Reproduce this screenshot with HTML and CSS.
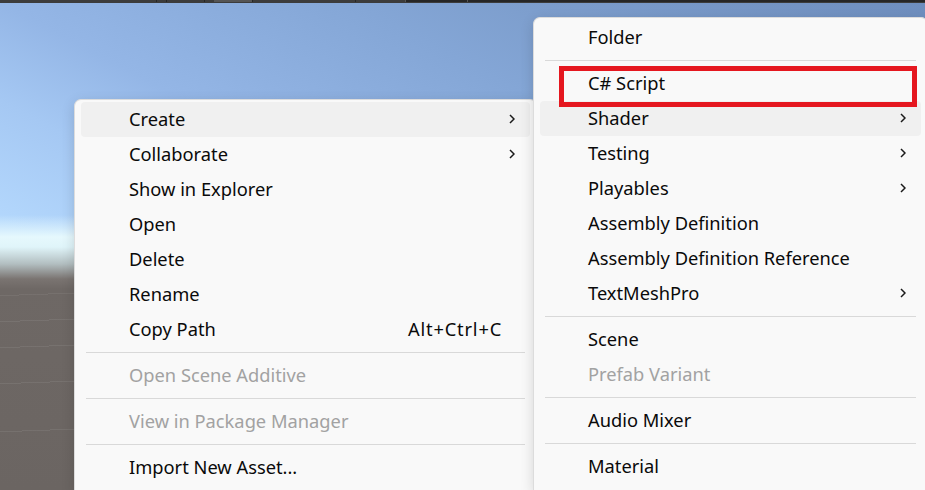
FILE: index.html
```html
<!DOCTYPE html>
<html lang="en">
  <head>
    <meta charset="UTF-8" />
    <meta name="viewport" content="width=device-width, initial-scale=1.0" />
    <title>Project</title>

    <link rel="stylesheet" href="styles.css">
  </head>

  <body>
    <!-- editor toolbar strip -->
    <div class="toolbar">
      <span></span><i></i><span></span><i></i><span></span><i></i><span></span>
      <b></b><i></i><span></span><i></i><span></span><b></b><i></i><b></b><i></i>
      <span></span>
    </div>

    <!-- scene view behind the menus -->
    <div class="scene"></div>

    <!-- project window context menu -->
    <ul class="menu menu-main">
      <li class="item active">
        <span class="label">Create</span>
        <svg class="chev" viewBox="0 0 6 10"><path d="M1 1l4 4-4 4" /></svg>
      </li>
      <li class="item">
        <span class="label">Collaborate</span>
        <svg class="chev" viewBox="0 0 6 10"><path d="M1 1l4 4-4 4" /></svg>
      </li>
      <li class="item"><span class="label">Show in Explorer</span></li>
      <li class="item"><span class="label">Open</span></li>
      <li class="item"><span class="label">Delete</span></li>
      <li class="item"><span class="label">Rename</span></li>
      <li class="item">
        <span class="label">Copy Path</span>
        <span class="keys">Alt+Ctrl+C</span>
      </li>
      <li class="sep"></li>
      <li class="item disabled"><span class="label">Open Scene Additive</span></li>
      <li class="sep"></li>
      <li class="item disabled"><span class="label">View in Package Manager</span></li>
      <li class="sep"></li>
      <li class="item"><span class="label">Import New Asset...</span></li>
    </ul>

    <!-- Create submenu -->
    <ul class="menu menu-sub">
      <li class="item"><span class="label">Folder</span></li>
      <li class="sep"></li>
      <li class="item"><span class="label">C# Script</span></li>
      <li class="item active">
        <span class="label">Shader</span>
        <svg class="chev" viewBox="0 0 6 10"><path d="M1 1l4 4-4 4" /></svg>
      </li>
      <li class="item">
        <span class="label">Testing</span>
        <svg class="chev" viewBox="0 0 6 10"><path d="M1 1l4 4-4 4" /></svg>
      </li>
      <li class="item">
        <span class="label">Playables</span>
        <svg class="chev" viewBox="0 0 6 10"><path d="M1 1l4 4-4 4" /></svg>
      </li>
      <li class="item"><span class="label">Assembly Definition</span></li>
      <li class="item"><span class="label">Assembly Definition Reference</span></li>
      <li class="item">
        <span class="label">TextMeshPro</span>
        <svg class="chev" viewBox="0 0 6 10"><path d="M1 1l4 4-4 4" /></svg>
      </li>
      <li class="sep"></li>
      <li class="item"><span class="label">Scene</span></li>
      <li class="item disabled"><span class="label">Prefab Variant</span></li>
      <li class="sep"></li>
      <li class="item"><span class="label">Audio Mixer</span></li>
      <li class="sep"></li>
      <li class="item"><span class="label">Material</span></li>

      <!-- highlight frame round the script entry -->
      <li class="callout"></li>
    </ul>
  </body>
</html>
```

FILE: styles.css
```css
* {
  box-sizing: border-box;
}

html,
body {
  margin: 0;
  overflow: hidden;
}

body {
  position: relative;
  width: 925px;
  height: 490px;
  display: flex;
  flex-direction: column;
  font-family: "Noto Sans", "Liberation Sans", sans-serif;
}

/* toolbar */
.toolbar {
  height: 3px;
  flex: none;
  display: grid;
  grid-template-columns: 156px 1px 9px 1px 37px 1px 9px 38px 1px 102px 1px 49px 1px 61px 1px 1fr;
  background-color: #3c3c3c;
}

.toolbar i {
  background-color: #262626;
}

.toolbar b {
  background-color: #555555;
}

/* scene view: grid lines, horizon, sky */
.scene {
  flex: 1;
  background-color: #94b6e6;
  background-image:
    linear-gradient(178deg, transparent 0 292px, rgba(255, 255, 255, 0.06) 292px 293px, transparent 293px 318px, rgba(255, 255, 255, 0.07) 318px 319px, transparent 319px 344px, rgba(255, 255, 255, 0.07) 344px 345px, transparent 345px 380px, rgba(255, 255, 255, 0.07) 380px 381px, transparent 381px 428px, rgba(255, 255, 255, 0.07) 428px 429px, transparent 429px),
    linear-gradient(180deg, transparent 0 212px, rgba(232, 250, 253, 0.95) 234px, rgba(226, 246, 249, 0.95) 244px, #b2bec0 261px, #7a7471 276px, #6e6865 286px, #6b6562 100%),
    linear-gradient(to top right, #c4e2ff 0%, #b4d8fd 27%, #a5c8f3 40%, #94b6e6 50%, #84a6d6 69%, #7d9ecd 78%, #6e8ebe 100%);
}

/* menus */
.menu {
  position: absolute;
  margin: 0;
  padding: 2px 6px;
  list-style: none;
  background-color: #f9f9f9;
  border: 1px solid #dcdcdc;
  border-bottom: none;
  border-radius: 7px 7px 0 0;
  box-shadow: 0 4px 14px rgba(0, 0, 0, 0.14);
}

.menu-main {
  left: 74px;
  top: 99px;
  width: 463px;
  height: 391px;
}

.menu-sub {
  left: 533px;
  top: 17px;
  width: 395px;
  height: 473px;
}

.item {
  height: 35px;
  display: flex;
  align-items: center;
  padding: 0 15px 2px 48px;
  border-radius: 4px;
  font-size: 18.3px;
  color: #0a0a0a;
}

.item.active {
  background-color: #f0f0f0;
}

.item.disabled {
  color: #a2a2a2;
}

.label {
  flex: 1;
  white-space: nowrap;
}

.keys {
  margin-right: 13px;
  letter-spacing: 0.8px;
}

.chev {
  width: 6px;
  height: 10px;
  fill: none;
  stroke: #1a1a1a;
  stroke-width: 1.5;
}

.sep {
  height: 11px;
  padding: 5px 5px;
}

.sep::before {
  content: '';
  display: block;
  height: 1px;
  background-color: #d9d9d9;
}

.callout {
  position: absolute;
  left: 25px;
  top: 48px;
  width: 358px;
  height: 41px;
  border: 5px solid #e5171f;
}
```
